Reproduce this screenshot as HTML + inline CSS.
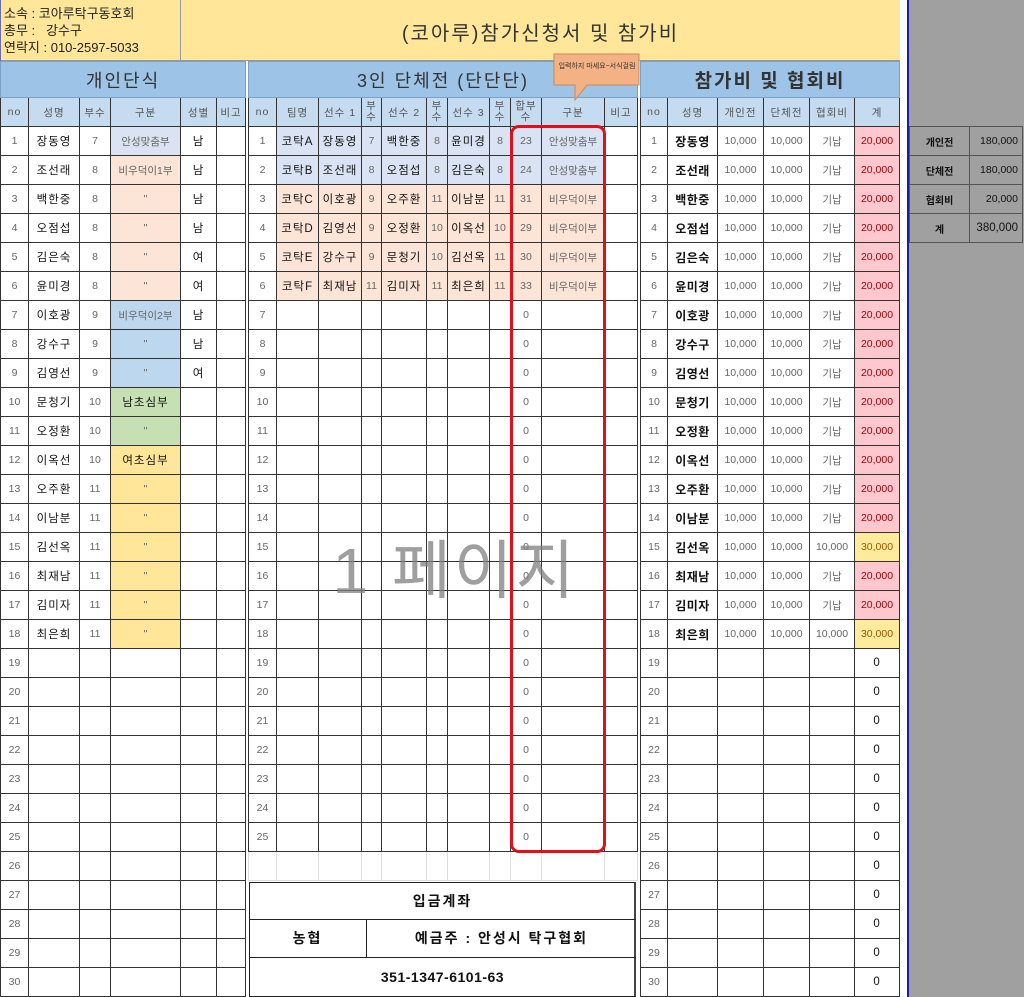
<!DOCTYPE html>
<html><head><meta charset="utf-8">
<style>
*{margin:0;padding:0;box-sizing:border-box}
body{width:1024px;height:997px;overflow:hidden;background:#fff;position:relative;font-family:"Liberation Sans","Noto Sans CJK KR",sans-serif;font-size:11px;color:#222}
.ab{position:absolute}
table{border-collapse:collapse;table-layout:fixed;position:absolute;top:61px}
td{border:1px solid #333;text-align:center;height:29px;padding:0;white-space:nowrap;overflow:hidden;font-size:10.5px}
tr.t td{height:36px;background:#9dc3e6;font-size:18px;color:#333;border-color:#7aa0c8;letter-spacing:2px}
tr.h td{background:#c5dbef;color:#555;font-size:10.5px;letter-spacing:1px}
.g{color:#666}
.n{color:#111;font-size:11.5px;letter-spacing:1px}
.b{font-weight:bold;color:#111;font-size:12px;letter-spacing:.5px}
.lv{background:#dae3f3}.pe{background:#fce4d6}.bl{background:#bdd7ee}.gr{background:#c6e0b4}.ye{background:#ffe699}
.pk{background:#ffc7ce;color:#9c0006}.yw{background:#ffeb9c;color:#9c5700}
</style></head><body>
<div class="ab" style="left:0;top:0;width:900px;height:61px;background:#ffe699;border-bottom:1px solid #999"></div>
<div class="ab" style="left:180px;top:0;width:1px;height:61px;background:#999"></div>
<div class="ab" style="left:4px;top:5px;font-size:13px;line-height:17px;color:#222">소속 : 코아루탁구동호회<br>총무 :&nbsp;&nbsp; 강수구<br>연락지 : 010-2597-5033</div>
<div class="ab" style="left:181px;top:17px;width:719px;text-align:center;font-size:20px;color:#333;letter-spacing:2px">(코아루)참가신청서 및 참가비</div>
<div class="ab" style="left:900px;top:0;width:8px;height:997px;background:#fff"></div>
<div class="ab" style="left:907px;top:0;width:2px;height:997px;background:#1a1aa8"></div>
<div class="ab" style="left:909px;top:0;width:115px;height:997px;background:#a0a0a0"></div>
<div class="ab" style="left:0;top:0;width:1px;height:997px;background:#6a6ab0"></div>

<table style="left:0;width:245px">
<colgroup><col style="width:28px"><col style="width:51px"><col style="width:31px"><col style="width:70px"><col style="width:36px"><col style="width:29px"></colgroup>
<tr class="t"><td colspan="6">개인단식</td></tr>
<tr class="h"><td>no</td><td>성명</td><td>부수</td><td>구분</td><td>성별</td><td>비고</td></tr>
<tr><td class="g">1</td><td class="n">장동영</td><td class="g">7</td><td class="lv g">안성맞춤부</td><td class="n">남</td><td></td></tr>
<tr><td class="g">2</td><td class="n">조선래</td><td class="g">8</td><td class="pe g">비우덕이1부</td><td class="n">남</td><td></td></tr>
<tr><td class="g">3</td><td class="n">백한중</td><td class="g">8</td><td class="pe g">"</td><td class="n">남</td><td></td></tr>
<tr><td class="g">4</td><td class="n">오점섭</td><td class="g">8</td><td class="pe g">"</td><td class="n">남</td><td></td></tr>
<tr><td class="g">5</td><td class="n">김은숙</td><td class="g">8</td><td class="pe g">"</td><td class="n">여</td><td></td></tr>
<tr><td class="g">6</td><td class="n">윤미경</td><td class="g">8</td><td class="pe g">"</td><td class="n">여</td><td></td></tr>
<tr><td class="g">7</td><td class="n">이호광</td><td class="g">9</td><td class="bl g">비우덕이2부</td><td class="n">남</td><td></td></tr>
<tr><td class="g">8</td><td class="n">강수구</td><td class="g">9</td><td class="bl g">"</td><td class="n">남</td><td></td></tr>
<tr><td class="g">9</td><td class="n">김영선</td><td class="g">9</td><td class="bl g">"</td><td class="n">여</td><td></td></tr>
<tr><td class="g">10</td><td class="n">문청기</td><td class="g">10</td><td class="gr n">남초심부</td><td></td><td></td></tr>
<tr><td class="g">11</td><td class="n">오정환</td><td class="g">10</td><td class="gr g">"</td><td></td><td></td></tr>
<tr><td class="g">12</td><td class="n">이옥선</td><td class="g">10</td><td class="ye n">여초심부</td><td></td><td></td></tr>
<tr><td class="g">13</td><td class="n">오주환</td><td class="g">11</td><td class="ye g">"</td><td></td><td></td></tr>
<tr><td class="g">14</td><td class="n">이남분</td><td class="g">11</td><td class="ye g">"</td><td></td><td></td></tr>
<tr><td class="g">15</td><td class="n">김선옥</td><td class="g">11</td><td class="ye g">"</td><td></td><td></td></tr>
<tr><td class="g">16</td><td class="n">최재남</td><td class="g">11</td><td class="ye g">"</td><td></td><td></td></tr>
<tr><td class="g">17</td><td class="n">김미자</td><td class="g">11</td><td class="ye g">"</td><td></td><td></td></tr>
<tr><td class="g">18</td><td class="n">최은희</td><td class="g">11</td><td class="ye g">"</td><td></td><td></td></tr>
<tr><td class="g">19</td><td></td><td></td><td></td><td></td><td></td></tr>
<tr><td class="g">20</td><td></td><td></td><td></td><td></td><td></td></tr>
<tr><td class="g">21</td><td></td><td></td><td></td><td></td><td></td></tr>
<tr><td class="g">22</td><td></td><td></td><td></td><td></td><td></td></tr>
<tr><td class="g">23</td><td></td><td></td><td></td><td></td><td></td></tr>
<tr><td class="g">24</td><td></td><td></td><td></td><td></td><td></td></tr>
<tr><td class="g">25</td><td></td><td></td><td></td><td></td><td></td></tr>
<tr><td class="g">26</td><td></td><td></td><td></td><td></td><td></td></tr>
<tr><td class="g">27</td><td></td><td></td><td></td><td></td><td></td></tr>
<tr><td class="g">28</td><td></td><td></td><td></td><td></td><td></td></tr>
<tr><td class="g">29</td><td></td><td></td><td></td><td></td><td></td></tr>
<tr><td class="g">30</td><td></td><td></td><td></td><td></td><td></td></tr>
</table>

<table style="left:248px;width:389px">
<colgroup><col style="width:28px"><col style="width:42px"><col style="width:43px"><col style="width:20px"><col style="width:45px"><col style="width:21px"><col style="width:42px"><col style="width:21px"><col style="width:31px"><col style="width:63px"><col style="width:33px"></colgroup>
<tr class="t"><td colspan="11">3인 단체전 (단단단)</td></tr>
<tr class="h"><td>no</td><td>팀명</td><td>선수 1</td><td style="line-height:11px">부<br>수</td><td>선수 2</td><td style="line-height:11px">부<br>수</td><td>선수 3</td><td style="line-height:11px">부<br>수</td><td style="line-height:11px">합부<br>수</td><td>구분</td><td>비고</td></tr>
<tr><td class="g">1</td><td class="lv n">코탁A</td><td class="lv n">장동영</td><td class="lv g">7</td><td class="lv n">백한중</td><td class="lv g">8</td><td class="lv n">윤미경</td><td class="lv g">8</td><td class="lv g">23</td><td class="lv g">안성맞춤부</td><td></td></tr>
<tr><td class="g">2</td><td class="lv n">코탁B</td><td class="lv n">조선래</td><td class="lv g">8</td><td class="lv n">오점섭</td><td class="lv g">8</td><td class="lv n">김은숙</td><td class="lv g">8</td><td class="lv g">24</td><td class="lv g">안성맞춤부</td><td></td></tr>
<tr><td class="g">3</td><td class="pe n">코탁C</td><td class="pe n">이호광</td><td class="pe g">9</td><td class="pe n">오주환</td><td class="pe g">11</td><td class="pe n">이남분</td><td class="pe g">11</td><td class="pe g">31</td><td class="pe g">비우덕이부</td><td></td></tr>
<tr><td class="g">4</td><td class="pe n">코탁D</td><td class="pe n">김영선</td><td class="pe g">9</td><td class="pe n">오정환</td><td class="pe g">10</td><td class="pe n">이옥선</td><td class="pe g">10</td><td class="pe g">29</td><td class="pe g">비우덕이부</td><td></td></tr>
<tr><td class="g">5</td><td class="pe n">코탁E</td><td class="pe n">강수구</td><td class="pe g">9</td><td class="pe n">문청기</td><td class="pe g">10</td><td class="pe n">김선옥</td><td class="pe g">11</td><td class="pe g">30</td><td class="pe g">비우덕이부</td><td></td></tr>
<tr><td class="g">6</td><td class="pe n">코탁F</td><td class="pe n">최재남</td><td class="pe g">11</td><td class="pe n">김미자</td><td class="pe g">11</td><td class="pe n">최은희</td><td class="pe g">11</td><td class="pe g">33</td><td class="pe g">비우덕이부</td><td></td></tr>
<tr><td class="g">7</td><td></td><td></td><td></td><td></td><td></td><td></td><td></td><td class="g">0</td><td></td><td></td></tr>
<tr><td class="g">8</td><td></td><td></td><td></td><td></td><td></td><td></td><td></td><td class="g">0</td><td></td><td></td></tr>
<tr><td class="g">9</td><td></td><td></td><td></td><td></td><td></td><td></td><td></td><td class="g">0</td><td></td><td></td></tr>
<tr><td class="g">10</td><td></td><td></td><td></td><td></td><td></td><td></td><td></td><td class="g">0</td><td></td><td></td></tr>
<tr><td class="g">11</td><td></td><td></td><td></td><td></td><td></td><td></td><td></td><td class="g">0</td><td></td><td></td></tr>
<tr><td class="g">12</td><td></td><td></td><td></td><td></td><td></td><td></td><td></td><td class="g">0</td><td></td><td></td></tr>
<tr><td class="g">13</td><td></td><td></td><td></td><td></td><td></td><td></td><td></td><td class="g">0</td><td></td><td></td></tr>
<tr><td class="g">14</td><td></td><td></td><td></td><td></td><td></td><td></td><td></td><td class="g">0</td><td></td><td></td></tr>
<tr><td class="g">15</td><td></td><td></td><td></td><td></td><td></td><td></td><td></td><td class="g">0</td><td></td><td></td></tr>
<tr><td class="g">16</td><td></td><td></td><td></td><td></td><td></td><td></td><td></td><td class="g">0</td><td></td><td></td></tr>
<tr><td class="g">17</td><td></td><td></td><td></td><td></td><td></td><td></td><td></td><td class="g">0</td><td></td><td></td></tr>
<tr><td class="g">18</td><td></td><td></td><td></td><td></td><td></td><td></td><td></td><td class="g">0</td><td></td><td></td></tr>
<tr><td class="g">19</td><td></td><td></td><td></td><td></td><td></td><td></td><td></td><td class="g">0</td><td></td><td></td></tr>
<tr><td class="g">20</td><td></td><td></td><td></td><td></td><td></td><td></td><td></td><td class="g">0</td><td></td><td></td></tr>
<tr><td class="g">21</td><td></td><td></td><td></td><td></td><td></td><td></td><td></td><td class="g">0</td><td></td><td></td></tr>
<tr><td class="g">22</td><td></td><td></td><td></td><td></td><td></td><td></td><td></td><td class="g">0</td><td></td><td></td></tr>
<tr><td class="g">23</td><td></td><td></td><td></td><td></td><td></td><td></td><td></td><td class="g">0</td><td></td><td></td></tr>
<tr><td class="g">24</td><td></td><td></td><td></td><td></td><td></td><td></td><td></td><td class="g">0</td><td></td><td></td></tr>
<tr><td class="g">25</td><td></td><td></td><td></td><td></td><td></td><td></td><td></td><td class="g">0</td><td></td><td></td></tr>
<tr><td style="border-color:#ddd"></td><td style="border-color:#ddd"></td><td style="border-color:#ddd"></td><td style="border-color:#ddd"></td><td style="border-color:#ddd"></td><td style="border-color:#ddd"></td><td style="border-color:#ddd"></td><td style="border-color:#ddd"></td><td style="border-color:#ddd"></td><td style="border-color:#ddd"></td><td style="border-color:#ddd"></td></tr>
</table>

<div class="ab" style="left:249px;top:882px;width:387px;height:115px;background:#fff;border:1px solid #222;border-right:2px solid #444"></div>
<div class="ab" style="left:249px;top:882px;width:387px;height:38px;line-height:38px;text-align:center;font-weight:bold;font-size:14px;color:#111;letter-spacing:2px">입금계좌</div>
<div class="ab" style="left:249px;top:919px;width:387px;height:1px;background:#222"></div>
<div class="ab" style="left:249px;top:957px;width:387px;height:1px;background:#222"></div>
<div class="ab" style="left:366px;top:919px;width:1px;height:38px;background:#222"></div>
<div class="ab" style="left:249px;top:920px;width:117px;height:37px;line-height:37px;text-align:center;font-weight:bold;font-size:14px;color:#111;letter-spacing:2px">농협</div>
<div class="ab" style="left:367px;top:920px;width:269px;height:37px;line-height:37px;text-align:center;font-weight:bold;font-size:14px;color:#111;letter-spacing:2px">예금주 : 안성시 탁구협회</div>
<div class="ab" style="left:249px;top:958px;width:387px;height:39px;line-height:39px;text-align:center;font-weight:bold;font-size:14px;color:#111;letter-spacing:.5px">351-1347-6101-63</div>

<table style="left:640px;width:259px">
<colgroup><col style="width:27px"><col style="width:50px"><col style="width:46px"><col style="width:46px"><col style="width:45px"><col style="width:45px"></colgroup>
<tr class="t"><td colspan="6" style="font-weight:bold;font-size:19px">참가비 및 협회비</td></tr>
<tr class="h"><td>no</td><td>성명</td><td>개인전</td><td>단체전</td><td>협회비</td><td>계</td></tr>
<tr><td class="g">1</td><td class="b">장동영</td><td class="g">10,000</td><td class="g">10,000</td><td class="g">기납</td><td class="pk">20,000</td></tr>
<tr><td class="g">2</td><td class="b">조선래</td><td class="g">10,000</td><td class="g">10,000</td><td class="g">기납</td><td class="pk">20,000</td></tr>
<tr><td class="g">3</td><td class="b">백한중</td><td class="g">10,000</td><td class="g">10,000</td><td class="g">기납</td><td class="pk">20,000</td></tr>
<tr><td class="g">4</td><td class="b">오점섭</td><td class="g">10,000</td><td class="g">10,000</td><td class="g">기납</td><td class="pk">20,000</td></tr>
<tr><td class="g">5</td><td class="b">김은숙</td><td class="g">10,000</td><td class="g">10,000</td><td class="g">기납</td><td class="pk">20,000</td></tr>
<tr><td class="g">6</td><td class="b">윤미경</td><td class="g">10,000</td><td class="g">10,000</td><td class="g">기납</td><td class="pk">20,000</td></tr>
<tr><td class="g">7</td><td class="b">이호광</td><td class="g">10,000</td><td class="g">10,000</td><td class="g">기납</td><td class="pk">20,000</td></tr>
<tr><td class="g">8</td><td class="b">강수구</td><td class="g">10,000</td><td class="g">10,000</td><td class="g">기납</td><td class="pk">20,000</td></tr>
<tr><td class="g">9</td><td class="b">김영선</td><td class="g">10,000</td><td class="g">10,000</td><td class="g">기납</td><td class="pk">20,000</td></tr>
<tr><td class="g">10</td><td class="b">문청기</td><td class="g">10,000</td><td class="g">10,000</td><td class="g">기납</td><td class="pk">20,000</td></tr>
<tr><td class="g">11</td><td class="b">오정환</td><td class="g">10,000</td><td class="g">10,000</td><td class="g">기납</td><td class="pk">20,000</td></tr>
<tr><td class="g">12</td><td class="b">이옥선</td><td class="g">10,000</td><td class="g">10,000</td><td class="g">기납</td><td class="pk">20,000</td></tr>
<tr><td class="g">13</td><td class="b">오주환</td><td class="g">10,000</td><td class="g">10,000</td><td class="g">기납</td><td class="pk">20,000</td></tr>
<tr><td class="g">14</td><td class="b">이남분</td><td class="g">10,000</td><td class="g">10,000</td><td class="g">기납</td><td class="pk">20,000</td></tr>
<tr><td class="g">15</td><td class="b">김선옥</td><td class="g">10,000</td><td class="g">10,000</td><td class="g">10,000</td><td class="yw">30,000</td></tr>
<tr><td class="g">16</td><td class="b">최재남</td><td class="g">10,000</td><td class="g">10,000</td><td class="g">기납</td><td class="pk">20,000</td></tr>
<tr><td class="g">17</td><td class="b">김미자</td><td class="g">10,000</td><td class="g">10,000</td><td class="g">기납</td><td class="pk">20,000</td></tr>
<tr><td class="g">18</td><td class="b">최은희</td><td class="g">10,000</td><td class="g">10,000</td><td class="g">10,000</td><td class="yw">30,000</td></tr>
<tr><td class="g">19</td><td></td><td></td><td></td><td></td><td class="n">0</td></tr>
<tr><td class="g">20</td><td></td><td></td><td></td><td></td><td class="n">0</td></tr>
<tr><td class="g">21</td><td></td><td></td><td></td><td></td><td class="n">0</td></tr>
<tr><td class="g">22</td><td></td><td></td><td></td><td></td><td class="n">0</td></tr>
<tr><td class="g">23</td><td></td><td></td><td></td><td></td><td class="n">0</td></tr>
<tr><td class="g">24</td><td></td><td></td><td></td><td></td><td class="n">0</td></tr>
<tr><td class="g">25</td><td></td><td></td><td></td><td></td><td class="n">0</td></tr>
<tr><td class="g">26</td><td></td><td></td><td></td><td></td><td class="n">0</td></tr>
<tr><td class="g">27</td><td></td><td></td><td></td><td></td><td class="n">0</td></tr>
<tr><td class="g">28</td><td></td><td></td><td></td><td></td><td class="n">0</td></tr>
<tr><td class="g">29</td><td></td><td></td><td></td><td></td><td class="n">0</td></tr>
<tr><td class="g">30</td><td></td><td></td><td></td><td></td><td class="n">0</td></tr>
</table>

<table style="left:909px;top:126px;width:113px">
<colgroup><col style="width:60px"><col style="width:53px"></colgroup>
<tr><td style="border-color:#555;font-weight:bold;font-size:10px;color:#111">개인전</td><td style="border-color:#555;text-align:right;padding-right:4px;color:#111">180,000</td></tr>
<tr><td style="border-color:#555;font-weight:bold;font-size:10px;color:#111">단체전</td><td style="border-color:#555;text-align:right;padding-right:4px;color:#111">180,000</td></tr>
<tr><td style="border-color:#555;font-weight:bold;font-size:10px;color:#111">협회비</td><td style="border-color:#555;text-align:right;padding-right:4px;color:#111">20,000</td></tr>
<tr><td style="border-color:#555;font-weight:bold;font-size:10px;color:#111">계</td><td style="border-color:#555;text-align:right;padding-right:4px;color:#111;font-size:11.5px">380,000</td></tr>
</table>

<div class="ab" style="left:510px;top:125px;width:96px;height:728px;border:3px solid #e0101a;border-radius:9px"></div>

<svg class="ab" style="left:553px;top:53px" width="88" height="50">
<path d="M1 1 H86 V32 H34 L22 47 L22 32 H1 Z" fill="#f4b183" stroke="#c98a5a" stroke-width="1"/>
</svg>
<div class="ab" style="left:553px;top:61px;width:88px;text-align:center;font-size:7px;color:#333">입력하지 마세요~서식걸림</div>

<div class="ab" style="left:290px;top:520px;width:330px;text-align:center;font-size:64px;color:#7f7f7f;opacity:.75;letter-spacing:3px">1 페이지</div>
</body></html>
